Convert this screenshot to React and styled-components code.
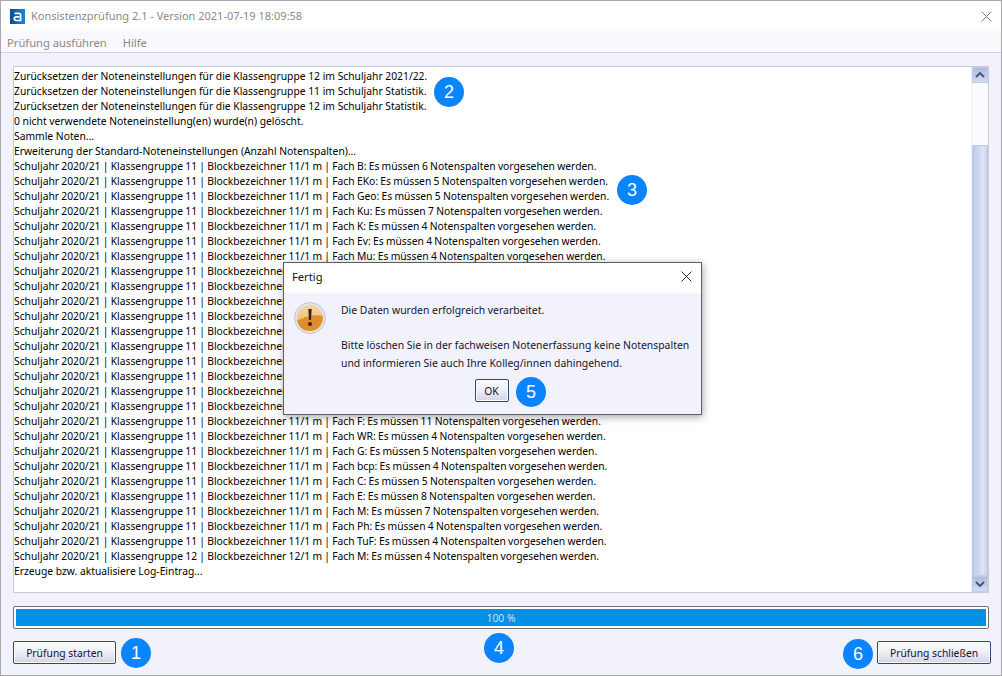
import React from "react";
import styled, { createGlobalStyle } from "styled-components";

const Global = createGlobalStyle`
  html, body { margin: 0; padding: 0; background: #fff; }
  body { font-family: "Noto Sans", "Liberation Sans", sans-serif; }
`;

const Win = styled.div`
  position: relative;
  width: 1002px;
  height: 676px;
  box-sizing: border-box;
  border: 1px solid #a9a9a9;
  display: flex;
  flex-direction: column;
  background: #f2f2fd;
  overflow: hidden;
`;
const TitleBar = styled.div`
  height: 30px;
  box-sizing: border-box;
  background: #fff;
  display: flex;
  align-items: center;
  padding: 0 9px 0 9px;
  gap: 6px;
  flex: none;
`;
const TitleText = styled.div`
  flex: 1;
  font-size: 11px;
  color: #8a8a8a;
  white-space: nowrap;
  margin-top: -1px;
`;
const MenuBar = styled.div`
  height: 22px;
  box-sizing: border-box;
  flex: none;
  background: #f8f8fd;
  border-bottom: 1px solid #d2d2dc;
  display: flex;
  align-items: center;
  gap: 16px;
  padding: 2px 6px 0;
  font-size: 11.2px;
  color: #8a8a8a;
`;
const Body = styled.div`
  flex: 1;
  display: flex;
  flex-direction: column;
  padding: 13px 12px 10px;
  min-height: 0;
`;
const LogBox = styled.div`
  height: 527px;
  flex: none;
  box-sizing: border-box;
  border: 1px solid #c9c9d6;
  background: #fff;
  display: flex;
`;
const Log = styled.div`
  flex: 1;
  padding-top: 2px;
  overflow: hidden;
`;
const Line = styled.div`
  height: 15px;
  line-height: 15px;
  font-size: 10.3px;
  color: #000;
  white-space: nowrap;
  word-spacing: ${(p) => (p.$row ? "-0.4px" : "0")};
`;
const Scrollbar = styled.div`
  width: 16px;
  flex: none;
  display: flex;
  flex-direction: column;
  background: #fbfbfe;
  border-left: 1px solid #eeeef6;
`;
const ScrollBtn = styled.div`
  height: 16px;
  flex: none;
  box-sizing: border-box;
  border: 1px solid #c3cbe6;
  background: linear-gradient(180deg, #aebbdf, #d3dbf2);
  display: flex;
  align-items: center;
  justify-content: center;
`;
const Track = styled.div`
  flex: 1;
  padding-top: 62px;
  display: flex;
`;
const Thumb = styled.div`
  flex: 1;
  border: 1px solid #c3cbe6;
  background: linear-gradient(90deg, #bcc8ea, #dfe5f8 75%, #c4cfee);
`;
const Progress = styled.div`
  margin-top: 13px;
  height: 23px;
  flex: none;
  box-sizing: border-box;
  border: 1px solid #6f6f75;
  border-radius: 2px;
  padding: 2px;
  background: #fff;
  display: flex;
`;
const ProgressFill = styled.div`
  flex: 1;
  background: #0090e6;
  display: flex;
  align-items: center;
  justify-content: center;
  color: #dcdcf0;
  font-size: 10.3px;
`;
const Footer = styled.div`
  margin: 12px -2px 0 0;
  display: flex;
  justify-content: space-between;
`;
const Button = styled.button`
  height: 23px;
  width: ${(p) => p.$w}px;
  box-sizing: border-box;
  border: 1px solid #2f4a72;
  border-radius: 2px;
  background: linear-gradient(180deg, #fbfbff 0%, #f0f0f8 45%, #d3d4e2 100%);
  box-shadow: inset 0 0 0 1px #fff;
  font-family: inherit;
  font-size: 10.3px;
  color: #14122e;
  padding: 0;
`;
const Badge = styled.div`
  position: absolute;
  left: ${(p) => p.$x - 16}px;
  top: ${(p) => p.$y - 16}px;
  width: 30px;
  height: 30px;
  border-radius: 50%;
  background: #0a84ff;
  color: #fff;
  font-family: "Liberation Sans", sans-serif;
  font-size: 18px;
  display: flex;
  align-items: center;
  justify-content: center;
`;
const Dialog = styled.div`
  position: absolute;
  left: 282px;
  top: 261px;
  width: 419px;
  height: 153px;
  box-sizing: border-box;
  border: 1px solid #5f5f5f;
  background: #f2f2fd;
  box-shadow: 1px 2px 8px rgba(0,0,0,.35);
  display: flex;
  flex-direction: column;
`;
const DialogTitle = styled.div`
  height: 30px;
  box-sizing: border-box;
  flex: none;
  background: #fff;
  display: flex;
  align-items: center;
  justify-content: space-between;
  padding: 0 9px 3px 8px;
  font-size: 11.2px;
  color: #111;
`;
const DialogBody = styled.div`
  display: flex;
  padding: 8px 0 0 10px;
  gap: 15px;
`;
const IconSlot = styled.div`
  flex: none;
  padding-top: 1px;
  line-height: 0;
`;
const DialogText = styled.div`
  font-size: 10.4px;
  color: #14122e;
  line-height: 18px;
  white-space: nowrap;
`;
const Para = styled.p`
  margin: 0 0 17px;
`;
const DialogActions = styled.div`
  display: flex;
  justify-content: center;
  margin-top: 7px;
  padding-right: 2px;
`;

const Fach = [
  ["B", 6], ["EKo", 5], ["Geo", 5], ["Ku", 7], ["K", 4], ["Ev", 4], ["Mu", 4],
  ["D", 8], ["E", 8], ["M", 7], ["Ph", 4], ["C", 5], ["G", 5], ["Sm", 4], ["Sw", 4], ["Inf", 4], ["L", 5],
  ["F", 11], ["WR", 4], ["G", 5], ["bcp", 4], ["C", 5], ["E", 8], ["M", 7], ["Ph", 4], ["TuF", 4],
];
const row = (g, b, f, n) =>
  `Schuljahr 2020/21 | Klassengruppe ${g} | Blockbezeichner ${b} m | Fach ${f}: Es müssen ${n} Notenspalten vorgesehen werden.`;
const lines = [
  "Zurücksetzen der Noteneinstellungen für die Klassengruppe 12 im Schuljahr 2021/22.",
  "Zurücksetzen der Noteneinstellungen für die Klassengruppe 11 im Schuljahr Statistik.",
  "Zurücksetzen der Noteneinstellungen für die Klassengruppe 12 im Schuljahr Statistik.",
  "0 nicht verwendete Noteneinstellung(en) wurde(n) gelöscht.",
  "Sammle Noten...",
  "Erweiterung der Standard-Noteneinstellungen (Anzahl Notenspalten)...",
  ...Fach.map(([f, n]) => row(11, "11/1", f, n)),
  row(12, "12/1", "M", 4),
  "Erzeuge bzw. aktualisiere Log-Eintrag...",
];

const Logo = () => (
  <svg width="15" height="15" viewBox="0 0 15 15">
    <defs>
      <linearGradient id="lg" x1="0" y1="0" x2="1" y2="0">
        <stop offset="0" stopColor="#0a4d8f" />
        <stop offset="1" stopColor="#1f86cf" />
      </linearGradient>
    </defs>
    <rect width="15" height="15" fill="url(#lg)" />
    <path d="M4.5 4.4h4.2c1.2 0 1.9.7 1.9 1.900v5.200h-4.300c-1.300 0-2-.7-2-1.900s.7-1.800 2-1.800h3.200" fill="none" stroke="#fff" strokeWidth="1.700" />
  </svg>
);
const Close = ({ c, s }) => (
  <svg width={s} height={s} viewBox="0 0 10 10">
    <path d="M.5.5l9 9M9.500.5l-9 9" stroke={c} strokeWidth="0.900" fill="none" />
  </svg>
);
const Chevron = ({ up }) => (
  <svg width="10" height="6" viewBox="0 0 10 6">
    <path d={up ? "M1 5l4-4 4 4" : "M1 1l4 4 4-4"} stroke="#45597f" strokeWidth="2" fill="none" />
  </svg>
);
const Warn = () => (
  <svg width="32" height="32" viewBox="0 0 32 32">
    <defs>
      <linearGradient id="wg" x1="0" y1="0" x2="0" y2="1">
        <stop offset="0" stopColor="#f8d3a3" />
        <stop offset="1" stopColor="#efb265" />
      </linearGradient>
    </defs>
    <circle cx="16" cy="16" r="15.500" fill="#e4e4e8" stroke="#c4c4ca" />
    <circle cx="16" cy="16" r="13" fill="url(#wg)" />
    <path d="M3.200 18c6-1 12-7 25.600-4 .8 8-5 15-12.800 15S4 24 3.200 18z" fill="#e08e2b" />
    <path d="M14.300 7h3.400l-.7 11h-2z" fill="#33261a" />
    <circle cx="16" cy="22" r="2" fill="#33261a" />
  </svg>
);

export default function App() {
  return (
    <>
      <Global />
      <Win>
        <TitleBar>
          <Logo />
          <TitleText>Konsistenzprüfung 2.1 - Version 2021-07-19 18:09:58</TitleText>
          <Close c="#777" s={11} />
        </TitleBar>
        <MenuBar>
          <span>Prüfung ausführen</span>
          <span>Hilfe</span>
        </MenuBar>
        <Body>
          <LogBox>
            <Log>
              {lines.map((l, i) => (
                <Line key={i} $row={l.startsWith("Schuljahr")}>{l}</Line>
              ))}
            </Log>
            <Scrollbar>
              <ScrollBtn><Chevron up /></ScrollBtn>
              <Track><Thumb /></Track>
              <ScrollBtn><Chevron /></ScrollBtn>
            </Scrollbar>
          </LogBox>
          <Progress>
            <ProgressFill>100 %</ProgressFill>
          </Progress>
          <Footer>
            <Button $w={103}>Prüfung starten</Button>
            <Button $w={114}>Prüfung schließen</Button>
          </Footer>
        </Body>
        <Dialog>
          <DialogTitle>
            <span>Fertig</span>
            <Close c="#222" s={11} />
          </DialogTitle>
          <DialogBody>
            <IconSlot><Warn /></IconSlot>
            <DialogText>
              <Para>Die Daten wurden erfolgreich verarbeitet.</Para>
              Bitte löschen Sie in der fachweisen Notenerfassung keine Notenspalten
              <br />
              und informieren Sie auch Ihre Kolleg/innen dahingehend.
            </DialogText>
          </DialogBody>
          <DialogActions>
            <Button $w={34}>OK</Button>
          </DialogActions>
        </Dialog>
        <Badge $x={136} $y={653}>1</Badge>
        <Badge $x={449} $y={92}>2</Badge>
        <Badge $x={632} $y={190}>3</Badge>
        <Badge $x={499} $y={648}>4</Badge>
        <Badge $x={531} $y={392}>5</Badge>
        <Badge $x={858} $y={654}>6</Badge>
      </Win>
    </>
  );
}
